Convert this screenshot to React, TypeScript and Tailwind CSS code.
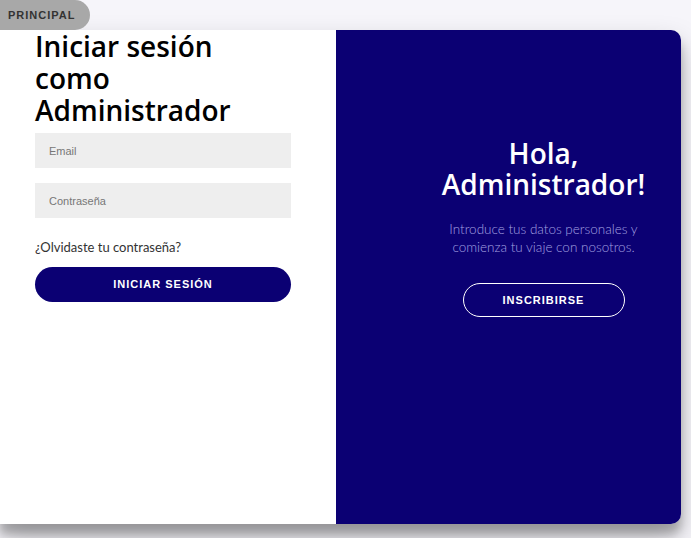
const navy = "bg-[#0b0073]";

export default function App() {
  return (
    <div className="relative min-h-screen bg-[#f6f5fa] pt-[30px] font-['Lato',sans-serif]">
      {/* top-left tag */}
      <div className="absolute left-0 top-0 z-10 flex h-[30px] w-[90px] items-center rounded-r-full bg-[#a8a8a8] pl-2 font-['Liberation_Sans',Arial,sans-serif] text-[11px] font-bold tracking-[1px] text-[#333]">
        PRINCIPAL
      </div>

      <div className="flex h-[494px] w-[681px] overflow-hidden rounded-r-[10px] bg-white shadow-[0_14px_28px_rgba(0,0,0,0.25),0_10px_10px_rgba(0,0,0,0.22)]">
        {/* sign in */}
        <div className="w-[336px] shrink-0 pl-[35px]">
          <h1 className="font-['Open_Sans',sans-serif] text-[28px] font-semibold leading-[32px] text-black">
            Iniciar sesión
            <br />
            como
            <br />
            Administrador
          </h1>
          <div className="mt-[7px] w-[256px] font-['Liberation_Sans',Arial,sans-serif]">
            <input
              placeholder="Email"
              className="block h-[35px] w-full bg-[#eeeeee] px-[14px] text-[11px] text-[#333] outline-none placeholder:text-[#777]"
            />
            <input
              type="password"
              placeholder="Contraseña"
              className="mt-[15px] block h-[35px] w-full bg-[#eeeeee] px-[14px] text-[11px] text-[#333] outline-none placeholder:text-[#777]"
            />
          </div>
          <a className="mt-[21px] block text-[13px] leading-[16px] text-[#333]">¿Olvidaste tu contraseña?</a>
          <button
            className={`mt-[12px] h-[35px] w-[256px] rounded-full ${navy} font-['Liberation_Sans',Arial,sans-serif] text-[11px] font-bold tracking-[1px] text-white`}
          >
            INICIAR SESIÓN
          </button>
        </div>

        {/* overlay panel */}
        <div className={`flex flex-1 flex-col items-center ${navy} pl-[70px] pt-[108px] text-center`}>
          <h1 className="font-['Open_Sans',sans-serif] text-[28px] font-semibold leading-[31px] text-white">
            Hola,
            <br />
            Administrador!
          </h1>
          <p className="mt-[20px] text-[13.5px] font-light leading-[18px] text-[#a4a1e0]">
            Introduce tus datos personales y
            <br />
            comienza tu viaje con nosotros.
          </p>
          <button className="mt-[27px] h-[34px] w-[162px] rounded-full border border-white font-['Liberation_Sans',Arial,sans-serif] text-[11px] font-bold tracking-[1px] text-white">
            INSCRIBIRSE
          </button>
        </div>
      </div>
    </div>
  );
}
